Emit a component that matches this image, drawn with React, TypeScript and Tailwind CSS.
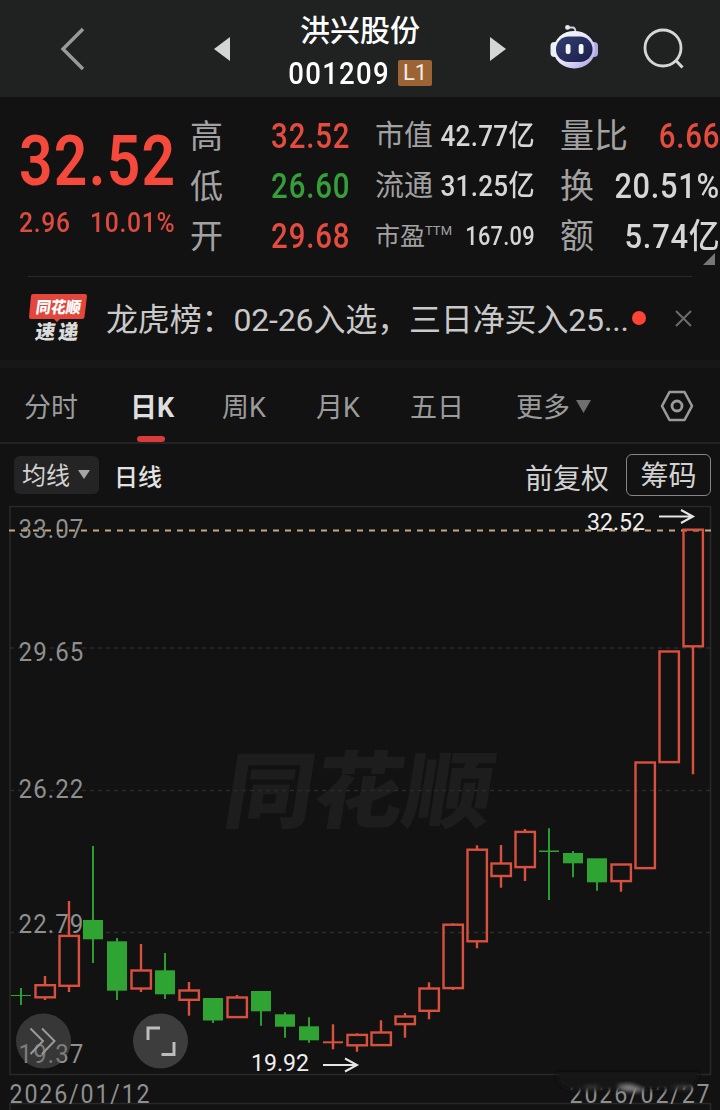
import type { ReactNode } from "react";
import { clsx } from "clsx";

type Candle = {
  up: boolean;
  high: number;
  top: number;
  bottom: number;
  low: number;
};

const c = (dir: "r" | "g", high: number, top: number, bottom: number, low: number): Candle => ({
  up: dir === "r",
  high,
  top,
  bottom,
  low,
});

// y values in chart space, one candle every 24px
const candles: Candle[] = [
  c("g", 988, 995, 996, 1005),
  c("r", 976, 984, 998.5, 1000),
  c("r", 901, 934.7, 987, 992),
  c("g", 846, 920, 939.3, 963),
  c("g", 938, 941.3, 990.7, 1000),
  c("r", 944, 969.3, 989.7, 992),
  c("g", 953, 970.3, 994.3, 999),
  c("r", 982, 989.3, 1001, 1015.7),
  c("g", 998, 998, 1020.5, 1023),
  c("r", 995, 996.3, 1018.3, 1018),
  c("g", 991, 991, 1011.3, 1025.7),
  c("g", 1012.3, 1014.3, 1026.7, 1037.7),
  c("g", 1017.3, 1026.3, 1040.3, 1042.7),
  c("r", 1024.3, 1041.3, 1043.3, 1049.3),
  c("r", 1033.3, 1033.7, 1046.5, 1051.7),
  c("r", 1020.3, 1031.3, 1046.3, 1046),
  c("r", 1013, 1015.3, 1025.3, 1037.7),
  c("r", 982.3, 987.3, 1012, 1019.3),
  c("r", 923.3, 923.5, 989.3, 990),
  c("r", 845.3, 848.5, 942.5, 948.3),
  c("r", 845, 862.3, 877.2, 887.7),
  c("r", 829, 830.7, 868.3, 881),
  c("g", 828.3, 850.5, 852, 900),
  c("g", 851, 853, 863.3, 877.3),
  c("g", 858.3, 858.3, 882.3, 890.7),
  c("r", 863.3, 863.3, 882.3, 891.7),
  c("r", 761.3, 761.3, 869.3, 869),
  c("r", 650.3, 650.3, 763.3, 763),
  c("r", 528.5, 528.5, 647.5, 774.3),
];

const axis = [
  { label: "33.07", y: 538 },
  { label: "29.65", y: 661 },
  { label: "26.22", y: 797.5 },
  { label: "22.79", y: 933 },
  { label: "19.37", y: 1063 },
];

const tabs = [
  { label: "分时", width: "w-[106px]" },
  { label: "日K", width: "w-[92px]", active: true },
  { label: "周K", width: "w-[94px]" },
  { label: "月K", width: "w-[94px]" },
  { label: "五日", width: "w-[106px]" },
];

// Roboto squeezed to the proportions of a DIN face
function Num({ children, className }: { children: ReactNode; className?: string }) {
  return (
    <span className={clsx("inline-block whitespace-nowrap leading-none", className)}>
      {children}
    </span>
  );
}

function Row({ label, children }: { label: ReactNode; children: ReactNode }) {
  return (
    <div className="flex h-[50px] items-center justify-between whitespace-nowrap font-medium">
      <span className="font-normal leading-none text-[#a2a2a2]">{label}</span>
      {children}
    </div>
  );
}

function Robot() {
  return (
    <svg className="mb-[3px]" width="50" height="46" viewBox="0 0 50 46">
      <defs>
        <linearGradient id="shell" x1="0" y1="0" x2="1" y2="1">
          <stop offset="0" stopColor="#f6fbff" />
          <stop offset="0.5" stopColor="#e9e6fb" />
          <stop offset="1" stopColor="#a99ce0" />
        </linearGradient>
        <linearGradient id="visor" x1="0" y1="0" x2="1" y2="1">
          <stop offset="0" stopColor="#33406f" />
          <stop offset="1" stopColor="#1b1c4a" />
        </linearGradient>
      </defs>
      <path d="M17 3.5h5.5q3 0 3 5" fill="none" stroke="#cfd3da" strokeWidth="1.8" />
      <circle cx="17.5" cy="3.4" r="2.4" fill="#e6eaee" />
      <rect x="0.5" y="18" width="8" height="15" rx="4" fill="#e8f0f8" />
      <rect x="40" y="18" width="8" height="15" rx="4" fill="#b5a6e6" />
      <ellipse cx="24.3" cy="25.7" rx="20.8" ry="18.8" fill="url(#shell)" />
      <rect x="6" y="12.5" width="36.500" height="25.500" rx="12.5" fill="url(#visor)" />
      <rect x="15.7" y="20" width="4.8" height="10" rx="2" fill="#f4f8ff" />
      <rect x="28.7" y="20" width="4.8" height="10" rx="2" fill="#f4f8ff" />
    </svg>
  );
}

function Header() {
  return (
    <header className="flex h-[97px] items-center bg-[#202221] pl-[60px]">
      <svg className="mr-[129px]" width="25" height="44" viewBox="0 0 25 44" fill="none">
        <path d="M23 2 3 22l20 20" stroke="#9a9a9a" strokeWidth="3.4" />
      </svg>
      <svg width="16" height="24" viewBox="0 0 16 24">
        <path d="M16 0v24L0 12z" fill="#d4d5d4" />
      </svg>
      <div className="flex w-[260px] flex-col items-center pt-[6px] font-medium text-white">
        <div className="text-[30px] leading-[42px]">洪兴股份</div>
        <div className="flex h-[42px] items-center gap-[8px]">
          <div className="flex w-[102px] justify-center">
            <Num className="scale-x-[.86] text-[32px] tracking-[1.5px]">001209</Num>
          </div>
          <span className="flex h-[26px] w-[34px] items-center justify-center rounded-xs bg-[#9c6334] text-[22px] font-normal leading-none text-[#f3ece4]">
            L1
          </span>
        </div>
      </div>
      <svg className="mr-[44px]" width="16" height="24" viewBox="0 0 16 24">
        <path d="M0 0v24l16-12z" fill="#d4d5d4" />
      </svg>
      <Robot />
      <svg className="ml-[43px]" width="42" height="42" viewBox="0 0 42 42" fill="none">
        <circle cx="20" cy="20" r="18" stroke="#d6d6d6" strokeWidth="2.8" />
        <path d="m32.5 32 7 7.500" stroke="#d6d6d6" strokeWidth="3" />
      </svg>
    </header>
  );
}

function Quote() {
  return (
    <section className="relative flex h-[179px] pt-[14px]">
      <div className="w-[190px] pl-[19px] text-[#f5493b]">
        <Num className="mt-[15px] origin-left scale-x-[.84] text-[70px] font-semibold tracking-[1.5px]">
          32.52
        </Num>
        <div className="mt-[13px] flex text-[28px] font-medium text-[#dc4a40]">
          <Num className="w-[71px] origin-left scale-x-[.88] tracking-[0.8px]">2.96</Num>
          <Num className="origin-left scale-x-[.88] tracking-[0.8px]">10.01%</Num>
        </div>
      </div>
      <div className="w-[160px] text-[33px] text-[#e54b3f]">
        <Row label="高">
          <Num className="origin-right scale-x-[.84] text-[35px] tracking-[1px]">32.52</Num>
        </Row>
        <Row label="低">
          <Num className="origin-right scale-x-[.84] text-[35px] tracking-[1px] text-[#35a03a]">26.60</Num>
        </Row>
        <Row label="开">
          <Num className="origin-right scale-x-[.84] text-[35px] tracking-[1px]">29.68</Num>
        </Row>
      </div>
      <div className="ml-[25px] w-[160px] text-[29px] text-[#d6d6d6]">
        <Row label="市值">
          <Num className="-ml-8 origin-right scale-x-[.9] tracking-[0.3px]">42.77亿</Num>
        </Row>
        <Row label="流通">
          <Num className="-ml-8 origin-right scale-x-[.9] tracking-[0.3px]">31.25亿</Num>
        </Row>
        <Row
          label={
            <span className="flex text-[25px]">
              市盈<span className="text-[13px]">TTM</span>
            </span>
          }
        >
          <Num className="-ml-4 origin-right scale-x-[.84] text-[26px] tracking-[0.3px]">167.09</Num>
        </Row>
      </div>
      <div className="ml-[25px] w-[160px] text-[34px] text-[#d6d6d6]">
        <Row label="量比">
          <Num className="origin-right scale-x-[.84] text-[35px] tracking-[1px] text-[#e54b3f]">6.66</Num>
        </Row>
        <Row label="换">
          <Num className="origin-right scale-x-[.88] text-[35px] tracking-[0.8px]">20.51%</Num>
        </Row>
        <Row label="额">
          <Num className="origin-right scale-x-[.91] text-[34px] tracking-[0.8px]">5.74亿</Num>
        </Row>
      </div>
      <svg className="absolute right-[5px] bottom-[11px]" width="12" height="12">
        <path d="M12 0v12H0z" fill="#777" />
      </svg>
    </section>
  );
}

function News() {
  return (
    <section className="flex h-[83px] items-center pl-[28px]">
      <svg width="60" height="52" viewBox="0 0 60 52" className="mr-[18px]">
        <path
          d="M4 1h53q2 0 2 2l-2.500 21q-.3 2-2.300 2H32l-3 3-3-3H3q-2.200 0-2-2L3 3q.2-2 2-2z"
          fill="#e3463b"
        />
        <g transform="skewX(-8)" fontWeight="900">
          <text x="10" y="20" fontSize="16" textLength="45" lengthAdjust="spacingAndGlyphs" fill="#fff">
            同花顺
          </text>
          <text x="13" y="46.500" fontSize="20" textLength="43" lengthAdjust="spacing" fill="#dcdcdc">
            速递
          </text>
        </g>
      </svg>
      <p className="w-[526px] whitespace-nowrap pt-[2px] text-[32px] leading-none tracking-[-0.15px] text-[#c9c9c9]">
        龙虎榜：02-26入选，三日净买入25...
      </p>
      <span className="mb-[2px] size-[14px] shrink-0 rounded-full bg-[#ff4335]" />
      <svg className="ml-[29px]" width="17" height="17" viewBox="0 0 17 17">
        <path d="m1 1 15 15M16 1 1 16" stroke="#6c6c6c" strokeWidth="2" />
      </svg>
    </section>
  );
}

function Tabs() {
  return (
    <nav className="flex h-[76px] border-b-2 border-[#232323] pl-[24px] text-[27px] leading-none text-[#9b9b9b]">
      {tabs.map((tab) => (
        <div key={tab.label} className={clsx("flex flex-col items-start pt-[27px]", tab.width)}>
          <span className={clsx(tab.active && "font-bold text-[#dedede]")}>{tab.label}</span>
          {tab.active && <i className="mt-[14px] ml-[7px] h-[7px] w-[28px] rounded-full bg-[#d93a3a]" />}
        </div>
      ))}
      <div className="flex w-[144px] items-start gap-[6px] pt-[27px]">
        更多
        <svg className="mt-[5px]" width="15" height="13">
          <path d="M0 0h15L7.500 13z" fill="#6f6f6f" />
        </svg>
      </div>
      <svg className="mt-[22px]" width="34" height="32" viewBox="0 0 34 32" fill="none" stroke="#9a9a9a">
        <path d="M9.500 2h15L32 16l-7.500 14h-15L2 16z" strokeWidth="2.600" strokeLinejoin="round" />
        <circle cx="17" cy="16" r="5" strokeWidth="2.800" />
      </svg>
    </nav>
  );
}

function Toolbar() {
  return (
    <section className="flex h-[61px] items-center pr-[9px] pl-[14px] text-[24px] leading-none text-[#d2d2d2]">
      <div className="flex h-[38px] w-[85px] items-center gap-[8px] rounded-md bg-[#242424] pt-[3px] pl-[8px]">
        均线
        <svg className="mb-[3px]" width="12" height="9">
          <path d="M0 0h12L6 9z" fill="#a4a4a4" />
        </svg>
      </div>
      <span className="mt-[6px] ml-[15px] font-medium text-[#e2e2e2]">日线</span>
      <span className="mt-[10px] ml-auto text-[28px]">前复权</span>
      <span className="ml-[17px] flex h-[42px] w-[85px] items-center justify-center rounded-md border-[1.5px] border-[#858585] pt-[5px] text-[28px]">
        筹码
      </span>
    </section>
  );
}

function CandleShape({ candle, x }: { candle: Candle; x: number }) {
  const { up, high, top, bottom, low } = candle;
  const color = up ? "#d9503f" : "#30a432";
  const flat = bottom - top < 3;
  return (
    <g stroke={color} strokeWidth={up ? 2.4 : 1.9}>
      {high < top && <line x1={x} y1={high} x2={x} y2={top + 1} />}
      {low > bottom && <line x1={x} y1={bottom - 1} x2={x} y2={low} />}
      {up && !flat ? (
        <rect x={x - 9.5} y={top + 1.2} width={19.4} height={bottom - top - 2.4} fill="none" />
      ) : (
        <rect x={x - 10} y={top} width={20} height={bottom - top} fill={color} stroke="none" />
      )}
    </g>
  );
}

function Chart() {
  return (
    <svg className="block" width="720" height="605" viewBox="0 505 720 605">
      <defs>
        <filter id="smear" x="-20%" y="-80%" width="140%" height="260%">
          <feGaussianBlur stdDeviation="2" />
        </filter>
      </defs>

      <g transform="translate(221 821) skewX(-9)">
        <text
          fontSize="83"
          fontWeight="900"
          textLength="268"
          lengthAdjust="spacingAndGlyphs"
          fill="#1d1d1d"
        >
          同花顺
        </text>
      </g>

      {/* Frame and grid */}
      <path d="M10 1074.500V506.500h700.500v568M9 1074.500h702M10 1110v-6.500h700.500v6.500" fill="none" stroke="#292929" strokeWidth="1.600" />
      {[648, 790.5, 932.5].map((y) => (
        <line key={y} x1="10" x2="710" y1={y} y2={y} stroke="#2b2b2b" strokeWidth="1.500" strokeDasharray="4 4" />
      ))}

      <g fill="#8f8f8f" fontSize="26">
        {axis.map((tick) => (
          <text key={tick.label} x="18.500" y={tick.y} textLength="66" lengthAdjust="spacingAndGlyphs" letterSpacing="1.200">
            {tick.label}
          </text>
        ))}
        <text x="9.500" y="1103" textLength="142" lengthAdjust="spacingAndGlyphs" letterSpacing="2" fontSize="25">
          2026/01/12
        </text>
        <text x="569.500" y="1103" textLength="142" lengthAdjust="spacingAndGlyphs" letterSpacing="2" fontSize="25">
          2026/02/27
        </text>
      </g>
      <g filter="url(#smear)">
        <path d="M556 1073h144l-8 16-52 1-68 1-12-6z" fill="#121212" />
        <path d="M618 1086l12-1 14 5-6 2-14-1z" fill="#858585" />
        <path d="M582 1087l14-1 4 2h-16zM668 1088l14-2 12 1-6 2z" fill="#4a4a4a" />
      </g>

      {/* Last price */}
      <line x1="9" x2="711" y1="530.500" y2="530.500" stroke="#c4a77c" strokeWidth="1.800" strokeDasharray="6 6" />

      {candles.map((candle, i) => (
        <CandleShape key={i} candle={candle} x={21 + i * 24} />
      ))}

      <g fill="#efefef" fontSize="23">
        <text x="587" y="529.500" textLength="58" lengthAdjust="spacingAndGlyphs">
          32.52
        </text>
        <text x="251" y="1070.500" textLength="58" lengthAdjust="spacingAndGlyphs">
          19.92
        </text>
      </g>
      <g fill="none" stroke="#e6e6e6" strokeWidth="2">
        <path d="M659 516.500h34M681 510l12 6.500-12 6.500" />
        <path d="M323 1065h34M345 1058.500l12 6.500-12 6.500" />
      </g>

      {/* Floating controls */}
      <circle cx="43.500" cy="1041" r="27.500" fill="#666" fillOpacity="0.450" />
      <path d="M30.500 1028.500 43 1041l-12.500 13M42 1028.500l12.500 12.500L42 1054" fill="none" stroke="#999" strokeWidth="2" />
      <circle cx="160.500" cy="1041" r="27.500" fill="#3d3d3d" />
      <path d="M148 1040v-12h12M174 1042v12.500h-12.500" fill="none" stroke="#bcbcbc" strokeWidth="3" />
    </svg>
  );
}

export default function App() {
  return (
    <main className="h-[1110px] w-[720px] overflow-hidden bg-[#121212] font-[Roboto,'Noto_Sans_CJK_SC',sans-serif]">
      <Header />
      <Quote />
      <div className="mx-[28px] h-px bg-[#2a2a2a]" />
      <News />
      <div className="h-[8px] bg-[#171717]" />
      <Tabs />
      <Toolbar />
      <Chart />
    </main>
  );
}
